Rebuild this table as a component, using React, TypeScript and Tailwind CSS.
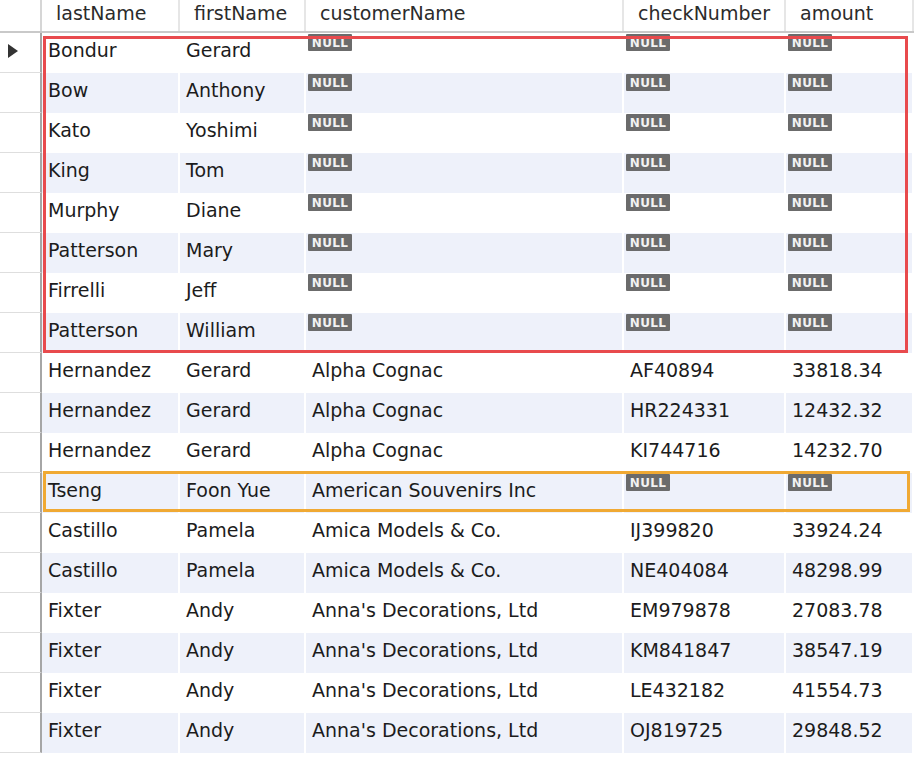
import React from "react";

type Row = [string, string, string | null, string | null, string | null];

const rows: Row[] = [
  ["Bondur", "Gerard", null, null, null],
  ["Bow", "Anthony", null, null, null],
  ["Kato", "Yoshimi", null, null, null],
  ["King", "Tom", null, null, null],
  ["Murphy", "Diane", null, null, null],
  ["Patterson", "Mary", null, null, null],
  ["Firrelli", "Jeff", null, null, null],
  ["Patterson", "William", null, null, null],
  ["Hernandez", "Gerard", "Alpha Cognac", "AF40894", "33818.34"],
  ["Hernandez", "Gerard", "Alpha Cognac", "HR224331", "12432.32"],
  ["Hernandez", "Gerard", "Alpha Cognac", "KI744716", "14232.70"],
  ["Tseng", "Foon Yue", "American Souvenirs Inc", null, null],
  ["Castillo", "Pamela", "Amica Models & Co.", "IJ399820", "33924.24"],
  ["Castillo", "Pamela", "Amica Models & Co.", "NE404084", "48298.99"],
  ["Fixter", "Andy", "Anna's Decorations, Ltd", "EM979878", "27083.78"],
  ["Fixter", "Andy", "Anna's Decorations, Ltd", "KM841847", "38547.19"],
  ["Fixter", "Andy", "Anna's Decorations, Ltd", "LE432182", "41554.73"],
  ["Fixter", "Andy", "Anna's Decorations, Ltd", "OJ819725", "29848.52"],
];

const headers = ["lastName", "firstName", "customerName", "checkNumber", "amount"];
const cols = "grid grid-cols-[42px_138px_126px_318px_162px_128px]";

function NullBadge() {
  return (
    <span className="mt-[1px] inline-flex h-[17px] w-[44px] items-center justify-center rounded-[1px] bg-[#6b6b6b] text-[12px] font-bold leading-none tracking-[0.3px] text-[#f2f2f2]">
      NULL
    </span>
  );
}

function DataRow({ row, index }: { row: Row; index: number }) {
  const striped = index % 2 === 1;
  return (
    <div className={`${cols} h-[40px]`}>
      <div className="flex items-center border-b border-r-2 border-b-[#dedede] border-r-[#a6a6a6] pl-[8px]">
        {index === 0 && (
          <svg width="10" height="14" viewBox="0 0 10 14" className="-mt-[4px]" aria-hidden>
            <path d="M0 0 L10 7 L0 14 Z" fill="#333" />
          </svg>
        )}
      </div>
      {row.map((cell, i) => (
        <div
          key={i}
          className={`flex overflow-hidden whitespace-nowrap border-r-2 border-white ${
            striped ? "bg-[#eef1fa]" : "bg-white"
          } ${cell === null ? "items-start pl-[2px]" : "items-center pl-[6px]"}`}
        >
          {cell === null ? <NullBadge /> : <span className="-mt-[5px]">{cell}</span>}
        </div>
      ))}
    </div>
  );
}

export default function App() {
  return (
    <div className="h-[760px] w-[914px] overflow-hidden bg-white font-['DejaVu_Sans',sans-serif] text-[19px] text-[#1c1c1c]">
      {/* Header */}
      <div className={`${cols} h-[33px] border-b-2 border-[#c9c9c9]`}>
        <div className="border-r-2 border-[#d6d6d6]" />
        {headers.map((h) => (
          <div
            key={h}
            className="flex items-center border-r-2 border-[#e6e6e6] pl-[14px] text-[#2b2b2b]"
          >
            <span className="-mt-[4px]">{h}</span>
          </div>
        ))}
      </div>

      {/* Rows 1-8, boxed in red */}
      <div className="relative">
        {rows.slice(0, 8).map((r, i) => (
          <DataRow key={i} row={r} index={i} />
        ))}
        <div className="pointer-events-none absolute top-[3px] right-[6px] bottom-0 left-[43px] border-[3px] border-[#e84a4d]" />
      </div>

      {rows.slice(8, 11).map((r, i) => (
        <DataRow key={i + 8} row={r} index={i + 8} />
      ))}

      {/* Tseng row, boxed in orange */}
      <div className="relative">
        <DataRow row={rows[11]} index={11} />
        <div className="pointer-events-none absolute -top-[2px] right-[4px] bottom-[1px] left-[43px] border-[3px] border-[#f0a933]" />
      </div>

      {rows.slice(12).map((r, i) => (
        <DataRow key={i + 12} row={r} index={i + 12} />
      ))}
    </div>
  );
}
